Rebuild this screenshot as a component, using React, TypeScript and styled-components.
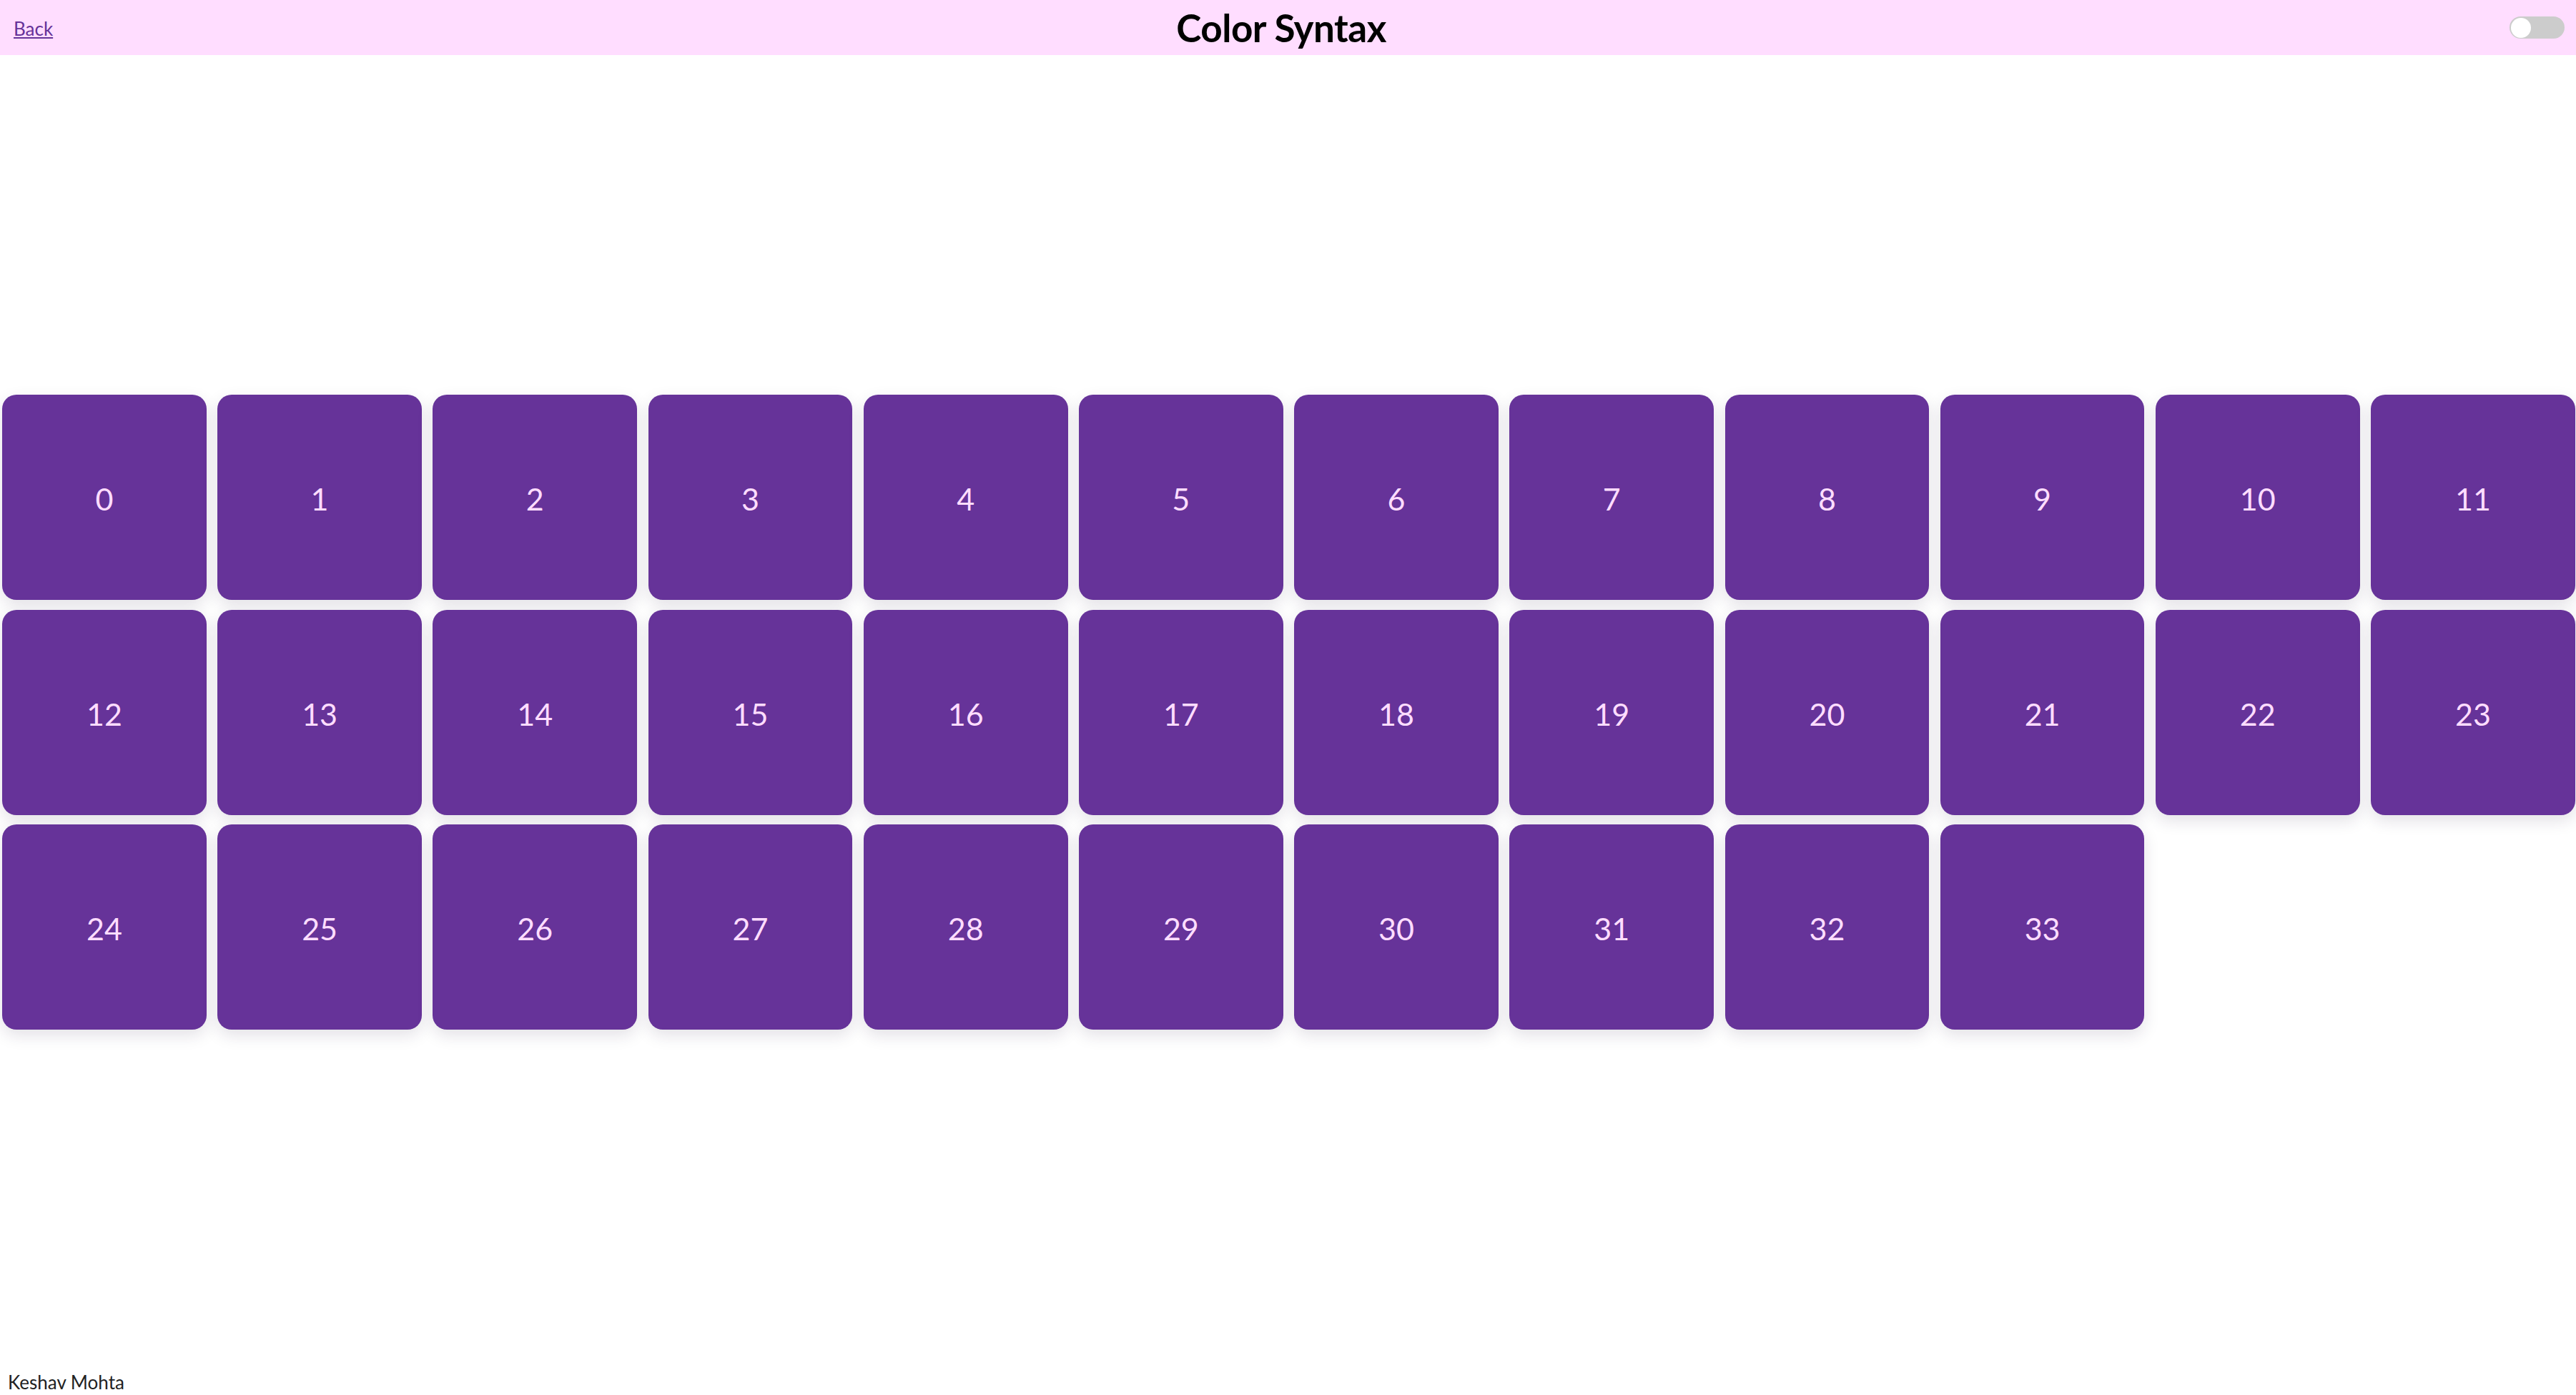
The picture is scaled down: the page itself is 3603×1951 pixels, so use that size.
import React, { useState } from "react";
import styled, { createGlobalStyle } from "styled-components";

const GlobalStyle = createGlobalStyle`
  html, body {
    margin: 0;
    padding: 0;
    background: #ffffff;
    font-family: Lato, "Open Sans", "Noto Sans", sans-serif;
  }
  #root {
    min-height: 100vh;
  }
`;

const Page = styled.div`
  min-height: 100vh;
  display: flex;
  flex-direction: column;
`;

const Header = styled.header`
  height: 77px;
  background: #ffddff;
  display: flex;
  align-items: center;
  justify-content: space-between;
  padding: 0 16px 0 19px;
  box-sizing: border-box;
`;

const BackLink = styled.a`
  font-size: 26px;
  color: #663399;
  text-decoration: underline;
  text-underline-offset: 2px;
  margin-top: 2px;
`;

const Title = styled.h1`
  margin: 0;
  font-size: 53px;
  font-weight: 700;
  color: #000;
  letter-spacing: -0.5px;
`;

const Track = styled.button<{ $on: boolean }>`
  width: 77px;
  height: 31px;
  border: none;
  border-radius: 16px;
  background: ${(p) => (p.$on ? "#663399" : "#cccccc")};
  display: flex;
  align-items: center;
  justify-content: ${(p) => (p.$on ? "flex-end" : "flex-start")};
  padding: 0 2px;
  box-sizing: border-box;
  cursor: pointer;
`;

const Knob = styled.span`
  width: 28px;
  height: 28px;
  border-radius: 50%;
  background: #ffffff;
`;

const Main = styled.main`
  flex: 1;
  display: flex;
  align-items: center;
  padding: 0 3px;
`;

const Grid = styled.div`
  display: grid;
  grid-template-columns: repeat(12, 285.8px);
  column-gap: 15.4px;
  row-gap: 13.5px;
`;

const Tile = styled.div`
  height: 287px;
  background: #663399;
  border-radius: 20px;
  box-shadow: 0 8px 22px rgba(40, 20, 60, 0.13);
  display: flex;
  align-items: center;
  justify-content: center;
  color: #ffddff;
  font-size: 43px;
  padding-top: 4px;
  box-sizing: border-box;
`;

const Footer = styled.footer`
  height: 36px;
  padding-left: 11px;
  font-size: 26px;
  color: #222;
  display: flex;
  align-items: flex-start;
  line-height: 36px;
`;

export default function App() {
  const [on, setOn] = useState(false);
  const tiles = Array.from({ length: 34 }, (_, i) => i);
  return (
    <>
      <GlobalStyle />
      <Page>
        <Header>
          <BackLink href="#">Back</BackLink>
          <Title>Color Syntax</Title>
          <Track $on={on} onClick={() => setOn(!on)} aria-label="toggle">
            <Knob />
          </Track>
        </Header>
        <Main>
          <Grid>
            {tiles.map((n) => (
              <Tile key={n}>{n}</Tile>
            ))}
          </Grid>
        </Main>
        <Footer>Keshav Mohta</Footer>
      </Page>
    </>
  );
}
